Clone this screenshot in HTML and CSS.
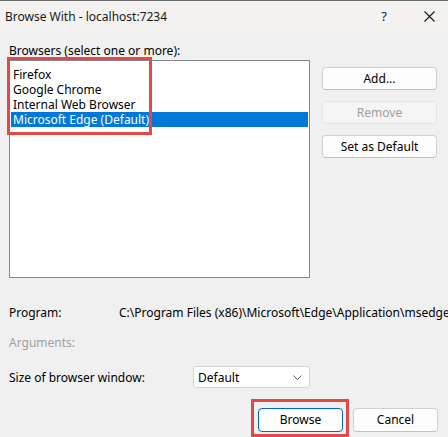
FILE: index.html
```html
<!DOCTYPE html>
<html>
<head>
<meta charset="utf-8">
<link rel="stylesheet" href="styles.css">
</head>
<body>
<div class="dialog">
  <div class="titlebar">
    <span class="title">Browse With - localhost:7234</span>
    <div class="title-controls">
      <span class="help">?</span>
      <svg class="close" width="11" height="11" viewBox="0 0 11 11"><path d="M0.5 0.5 L10.5 10.5 M10.5 0.5 L0.5 10.5" stroke="#1a1a1a" stroke-width="1.1" fill="none"/></svg>
    </div>
  </div>
  <div class="content">
    <div class="label-browsers"><span class="u">B</span>rowsers (select one or more):</div>
    <div class="main">
      <div class="listbox">
        <div class="item">Firefox</div>
        <div class="item">Google Chrome</div>
        <div class="item">Internal Web Browser</div>
        <div class="item selected">Microsoft Edge (Default)</div>
      </div>
      <div class="side-buttons">
        <button class="btn">Add...</button>
        <button class="btn disabled">Remove</button>
        <button class="btn">Set as Default</button>
      </div>
    </div>
    <div class="row program">
      <span class="row-label">Program:</span>
      <span class="path">C:\Program Files (x86)\Microsoft\Edge\Application\msedge.exe</span>
    </div>
    <div class="row arguments">
      <span class="row-label muted">Arguments:</span>
    </div>
    <div class="row size">
      <span class="row-label size-label">Size of browser window:</span>
      <div class="select">
        <span>Default</span>
        <svg width="9" height="5" viewBox="0 0 9 5"><path d="M0.5 0.5 L4.5 4.5 L8.5 0.5" stroke="#5f5f5f" stroke-width="1" fill="none"/></svg>
      </div>
    </div>
    <div class="footer">
      <button class="btn primary">Browse</button>
      <button class="btn">Cancel</button>
    </div>
  </div>
  <div class="hl hl-list"></div>
  <div class="hl hl-browse"></div>
</div>
</body>
</html>
```
FILE: styles.css
```css
* { box-sizing: border-box; }
html, body { margin: 0; padding: 0; }
body {
  width: 448px;
  height: 437px;
  overflow: hidden;
  font-family: "Noto Sans", "Open Sans", sans-serif;
  font-size: 12px;
  color: #000;
  background: #f0f0f0;
}
.dialog {
  position: relative;
  width: 448px;
  height: 437px;
  overflow: hidden;
}
.titlebar {
  height: 31px;
  background: #f3f2f0;
  border-top: 1px solid #6a6a6a;
  display: flex;
  align-items: center;
  justify-content: space-between;
  padding-left: 5px;
}
.title { font-size: 12px; color: #1a1a1a; }
.title-controls {
  display: flex;
  align-items: center;
  height: 100%;
}
.help {
  font-size: 13px;
  width: 46px;
  text-align: center;
  color: #1a1a1a;
  margin-right: 17px;
}
.close { margin: 0 13px 0 0; }
.content {
  padding: 12px 0 0 9px;
}
.label-browsers {
  line-height: 16px;
  height: 17px;
}
.main {
  display: flex;
  align-items: flex-start;
}
.listbox {
  width: 301px;
  height: 218px;
  background: #fff;
  border: 1px solid #828790;
  padding: 6px 1px 0 1px;
}
.item {
  height: 15px;
  line-height: 15px;
  padding-left: 2px;
  white-space: nowrap;
}
.item.selected {
  background: #0078d7;
  color: #fff;
}
.side-buttons {
  display: flex;
  flex-direction: column;
  gap: 11px;
  margin-left: 12px;
  margin-top: 7px;
}
.btn {
  font-family: "Noto Sans", "Open Sans", sans-serif;
  font-size: 12px;
  color: #000;
  background: #fdfdfd;
  border: 1px solid #d0d0d0;
  border-bottom-color: #c0c0c0;
  border-radius: 4px;
  width: 115px;
  height: 23px;
  padding: 0;
  line-height: 20px;
}
.btn.disabled {
  background: #f5f5f5;
  border-color: #e5e5e5;
  color: #a0a0a0;
}
.row {
  display: flex;
  align-items: center;
  white-space: nowrap;
}
.row-label { width: 110px; flex: none; }
.program { margin-top: 26px; height: 16px; }
.path { flex: none; }
.arguments { margin-top: 14px; height: 16px; }
.muted { color: #a0a0a0; }
.size { margin-top: 16px; height: 22px; }
.size-label { width: 184px; }
.select {
  width: 117px;
  height: 22px;
  background: #fff;
  border: 1px solid #d4d4d4;
  border-radius: 3px;
  display: flex;
  align-items: center;
  justify-content: space-between;
  padding: 0 7px 0 4px;
}
.footer {
  display: flex;
  justify-content: flex-end;
  gap: 10px;
  margin-top: 20px;
  padding-right: 10px;
}
.footer .btn { width: 85px; height: 24px; }
.btn.primary {
  border: 1px solid #0067c0;
}
.hl {
  position: absolute;
  border: 3px solid #e34848;
}
.hl-list { left: 7px; top: 57px; width: 145px; height: 78px; }
.hl-browse { left: 251px; top: 399px; width: 98px; height: 38px; }
```
